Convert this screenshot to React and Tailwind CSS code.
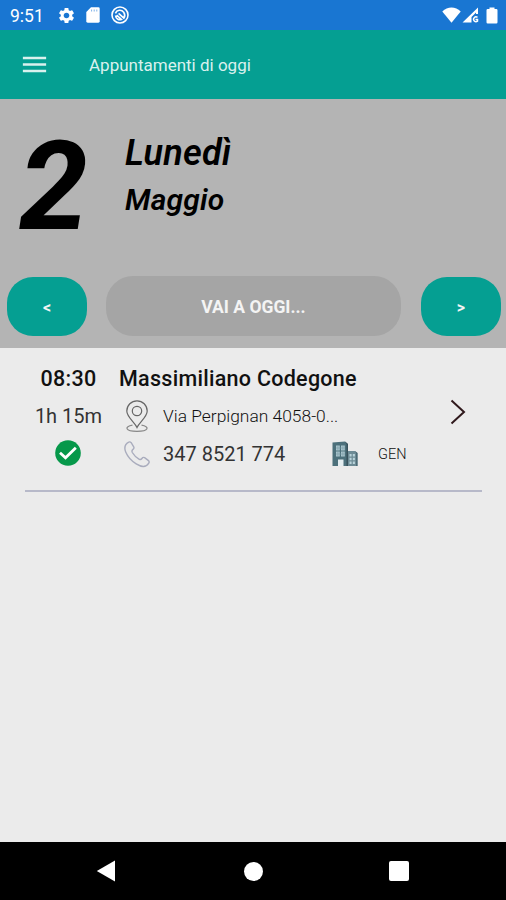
import { MdSettings, MdMenu } from "react-icons/md";

const StatusBar = () => {
    return (
        <div className="flex h-[30px] items-center justify-between bg-[#1976d2] pl-[10px] pr-[8px] text-white">
            <div className="flex items-center">
                <p className="w-[47px] text-[17.5px] leading-[30px] pt-[2px]">9:51</p>
                <MdSettings className="h-[19px] w-[19px]" />
                <svg className="ml-[10px] h-[16px] w-[14px]" viewBox="0 0 14 16" fill="none">
                    <path d="M5 0.3H12.3Q13.7 0.3 13.7 1.7V14.3Q13.7 15.7 12.3 15.7H1.7Q0.3 15.7 0.3 14.3V5Z" fill="white" />
                    <path d="M5.6 2.5V4.5M8.2 2.5V4.5M10.8 2.5V4.5" stroke="#7fb2e8" strokeWidth="1" />
                </svg>
                <svg className="ml-[11px] h-[18px] w-[18px]" viewBox="0 0 18 18" fill="none" stroke="white">
                    <circle cx="9" cy="9" r="8" strokeWidth="1.6" />
                    <path d="M4.4 7.4C5.8 3.8 10.4 3.2 12.7 6.2C14.2 8.4 13.9 10.6 12.9 12.2L7.6 7.4" strokeWidth="1.6" />
                    <path d="M4.5 9.5C4.8 12.6 7.8 14.3 10.4 13.4L5.6 9.2" strokeWidth="1.6" />
                </svg>
            </div>
            <div className="flex items-center">
                <svg className="h-[16px] w-[19px]" viewBox="0 0 19 16" fill="white">
                    <path d="M0.3 4.4C5.5 -0.9 13.5 -0.9 18.7 4.4L9.5 15.8Z" />
                </svg>
                <svg className="ml-[1px] h-[16px] w-[17px]" viewBox="0 0 17 16">
                    <path d="M0.5 15.5L16 0.5V7H14V5.5L9.5 10V15.5Z" fill="white" />
                    <path d="M15.5 10.4A2.4 2.4 0 1 0 15.5 14.2V12.4H13.5" fill="none" stroke="white" strokeWidth="1.5" />
                </svg>
                <svg className="ml-[7px] h-[17px] w-[12px]" viewBox="0 0 12 17" fill="white">
                    <path d="M3.5 0.5H8.5V2H10.3Q11.5 2 11.5 3.2V15.3Q11.5 16.5 10.3 16.5H1.7Q0.5 16.5 0.5 15.3V3.2Q0.5 2 1.7 2H3.5Z" />
                </svg>
            </div>
        </div>
    );
};

const DayHeader = () => {
    return (
        <div className="h-[249px] bg-[#b4b4b4] pt-[26px]">
            <div className="flex h-[151px] items-start italic text-black">
                <p className="w-[125px] pl-[19px] text-[124px] font-bold leading-[124px]">2</p>
                <div>
                    <p className="mt-[4px] text-[36px] font-semibold leading-[48px] tracking-[0.2px]">Lunedì</p>
                    <p className="text-[30px] font-semibold leading-[46px] tracking-[0.2px]">Maggio</p>
                </div>
            </div>
            <div className="flex h-[60px] items-center justify-between pl-[7px] pr-[5px] font-bold text-[#f4f4f4]">
                <button className="h-[59px] w-[80px] rounded-[26px] bg-[#059f92] pt-[3px] text-[16px]">&lt;</button>
                <button className="mr-px h-[60px] w-[295px] rounded-[27px] bg-[#a5a5a5] pt-[3px] text-[17.5px]">VAI A OGGI...</button>
                <button className="h-[59px] w-[80px] rounded-[26px] bg-[#059f92] pt-[3px] text-[16px]">&gt;</button>
            </div>
        </div>
    );
};

const PinIcon = () => (
    <svg className="h-[33px] w-[24px]" viewBox="0 0 24 33" fill="none" stroke="#666" strokeWidth="1.2">
        <path d="M12 27.5C9.5 22 1.8 17 1.8 11A10.2 10.2 0 0 1 22.2 11C22.2 17 14.5 22 12 27.5Z" />
        <circle cx="12" cy="11" r="4.7" />
        <path d="M7.5 25.2C-1 26.5 0 31.3 12 31.3S25 26.5 16.5 25.2" stroke="#888" />
    </svg>
);

const PhoneIcon = () => (
    <svg className="h-[27px] w-[26px]" viewBox="0 0 26 27" fill="none" stroke="#a9acbd" strokeWidth="1.4">
        <path d="M4.7 1.2Q6 0.4 7.2 1.7L9.7 5.8Q10.4 7.2 9.2 8.2Q7.3 9.4 8.3 11.5Q11 16 15.3 18.3Q16.9 19 17.9 17.5Q19 15.8 20.6 16.7L24.5 19.6Q25.7 20.8 24.6 22.3C21.8 26.8 17.3 26 12.2 22.8C7.3 19.7 3.7 15.6 1.7 10.9C0.1 7 1.2 3.2 4.7 1.2Z" />
    </svg>
);

const BuildingIcon = () => (
    <svg className="h-[26px] w-[26px]" viewBox="0 0 26 26">
        <path d="M0.5 1.5L13 0.5L16 3V25H0.5Z" fill="#4c707b" />
        <path d="M13 0.5L16 3V25H14.5V3Z" fill="#38525c" />
        <path d="M16 10H23L25.5 12V25H16Z" fill="#6d8b95" />
        <path d="M23 10L25.5 12V25H24V12Z" fill="#4d6a75" />
        <path d="M4 4.5H7.8V9.5H4ZM9 4.5H12.8V9.5H9ZM4 10.5H7.8V15.5H4ZM9 10.5H12.8V15.5H9Z" fill="#a9c5ce" />
        <path d="M4 7H12.8M4 13H12.8M5.9 4.5V15.5M10.9 4.5V15.5" stroke="#7a9aa5" strokeWidth="0.6" />
        <path d="M17.5 13H19.6V15.5H17.5ZM20.8 13H22.9V15.5H20.8ZM17.5 16.8H19.6V19.3H17.5ZM20.8 16.8H22.9V19.3H20.8ZM17.5 20.6H19.6V23H17.5ZM20.8 20.6H22.9V23H20.8Z" fill="#b9d3da" />
        <path d="M6 18.5H11.5V25H6Z" fill="#e4edf0" />
    </svg>
);

const AppointmentRow = ({ a }) => {
    return (
        <div className="ml-[25px] mr-[24px] flex h-[144px] border-b-2 border-[#b7b9c9] pt-[11px] text-[#111]">
            <div className="flex w-[87px] flex-col items-center">
                <p className="pt-px text-[21.5px] font-medium leading-[37px] tracking-[0.3px]">{a.time}</p>
                <p className="text-[20px] leading-[38px] text-[#333] whitespace-nowrap">{a.duration}</p>
                <svg className="mt-[5px] mr-[2px] h-[26px] w-[26px]" viewBox="0 0 26 26" fill="none">
                    <circle cx="13" cy="13" r="12.8" fill="#06984a" />
                    <path d="M5 12.8L10.5 17.8L20.8 7.8" stroke="white" strokeWidth="2.8" />
                </svg>
            </div>
            <div className="w-[313px] pl-[7px]">
                <p className="pt-px text-[21.5px] font-medium leading-[37px] tracking-[0.28px] whitespace-nowrap">{a.name}</p>
                <div className="flex h-[38px] items-center pl-[6px]">
                    <PinIcon />
                    <p className="ml-[14px] text-[17.4px] font-light leading-[38px]">{a.address}</p>
                </div>
                <div className="flex h-[38px] items-center pl-[5px]">
                    <PhoneIcon />
                    <p className="ml-[13px] w-[169px] text-[20px] leading-[38px] text-[#333]">{a.phone}</p>
                    <BuildingIcon />
                    <p className="ml-[20px] mt-px text-[14.5px] font-light">{a.type}</p>
                </div>
            </div>
            <svg className="ml-[25px] mt-[40px] h-[26px] w-[16px]" viewBox="0 0 16 26" fill="none" stroke="#30191c" strokeWidth="2">
                <path d="M1.5 1.5L14 13L1.5 24.5" />
            </svg>
        </div>
    );
};

const appointment = {
    time: "08:30",
    duration: "1h 15m",
    name: "Massimiliano Codegone",
    address: "Via Perpignan 4058-0...",
    phone: "347 8521 774",
    type: "GEN",
};

const App = () => {
    return (
        <div className="flex h-[900px] w-[506px] flex-col overflow-hidden bg-[#ebebeb] font-['Roboto',sans-serif]">
            <StatusBar />
            <div className="flex h-[69px] items-center bg-[#059f92] pl-[19px] text-[#d9f1ee]">
                <MdMenu className="h-[31px] w-[31px]" />
                <p className="ml-[39px] mt-[2px] text-[17px]">Appuntamenti di oggi</p>
            </div>
            <DayHeader />
            <div className="flex-1">
                <AppointmentRow a={appointment} />
            </div>
            <div className="flex h-[58px] items-center bg-black pl-[96px]">
                <svg className="h-[22px] w-[19px]" viewBox="0 0 19 22" fill="white">
                    <path d="M0.8 11L19 0.5V21.5Z" />
                </svg>
                <div className="ml-[129px] h-[19px] w-[19px] rounded-full bg-white"></div>
                <div className="ml-[126px] h-[20px] w-[20px] rounded-[2px] bg-white"></div>
            </div>
        </div>
    );
};

export default App;
